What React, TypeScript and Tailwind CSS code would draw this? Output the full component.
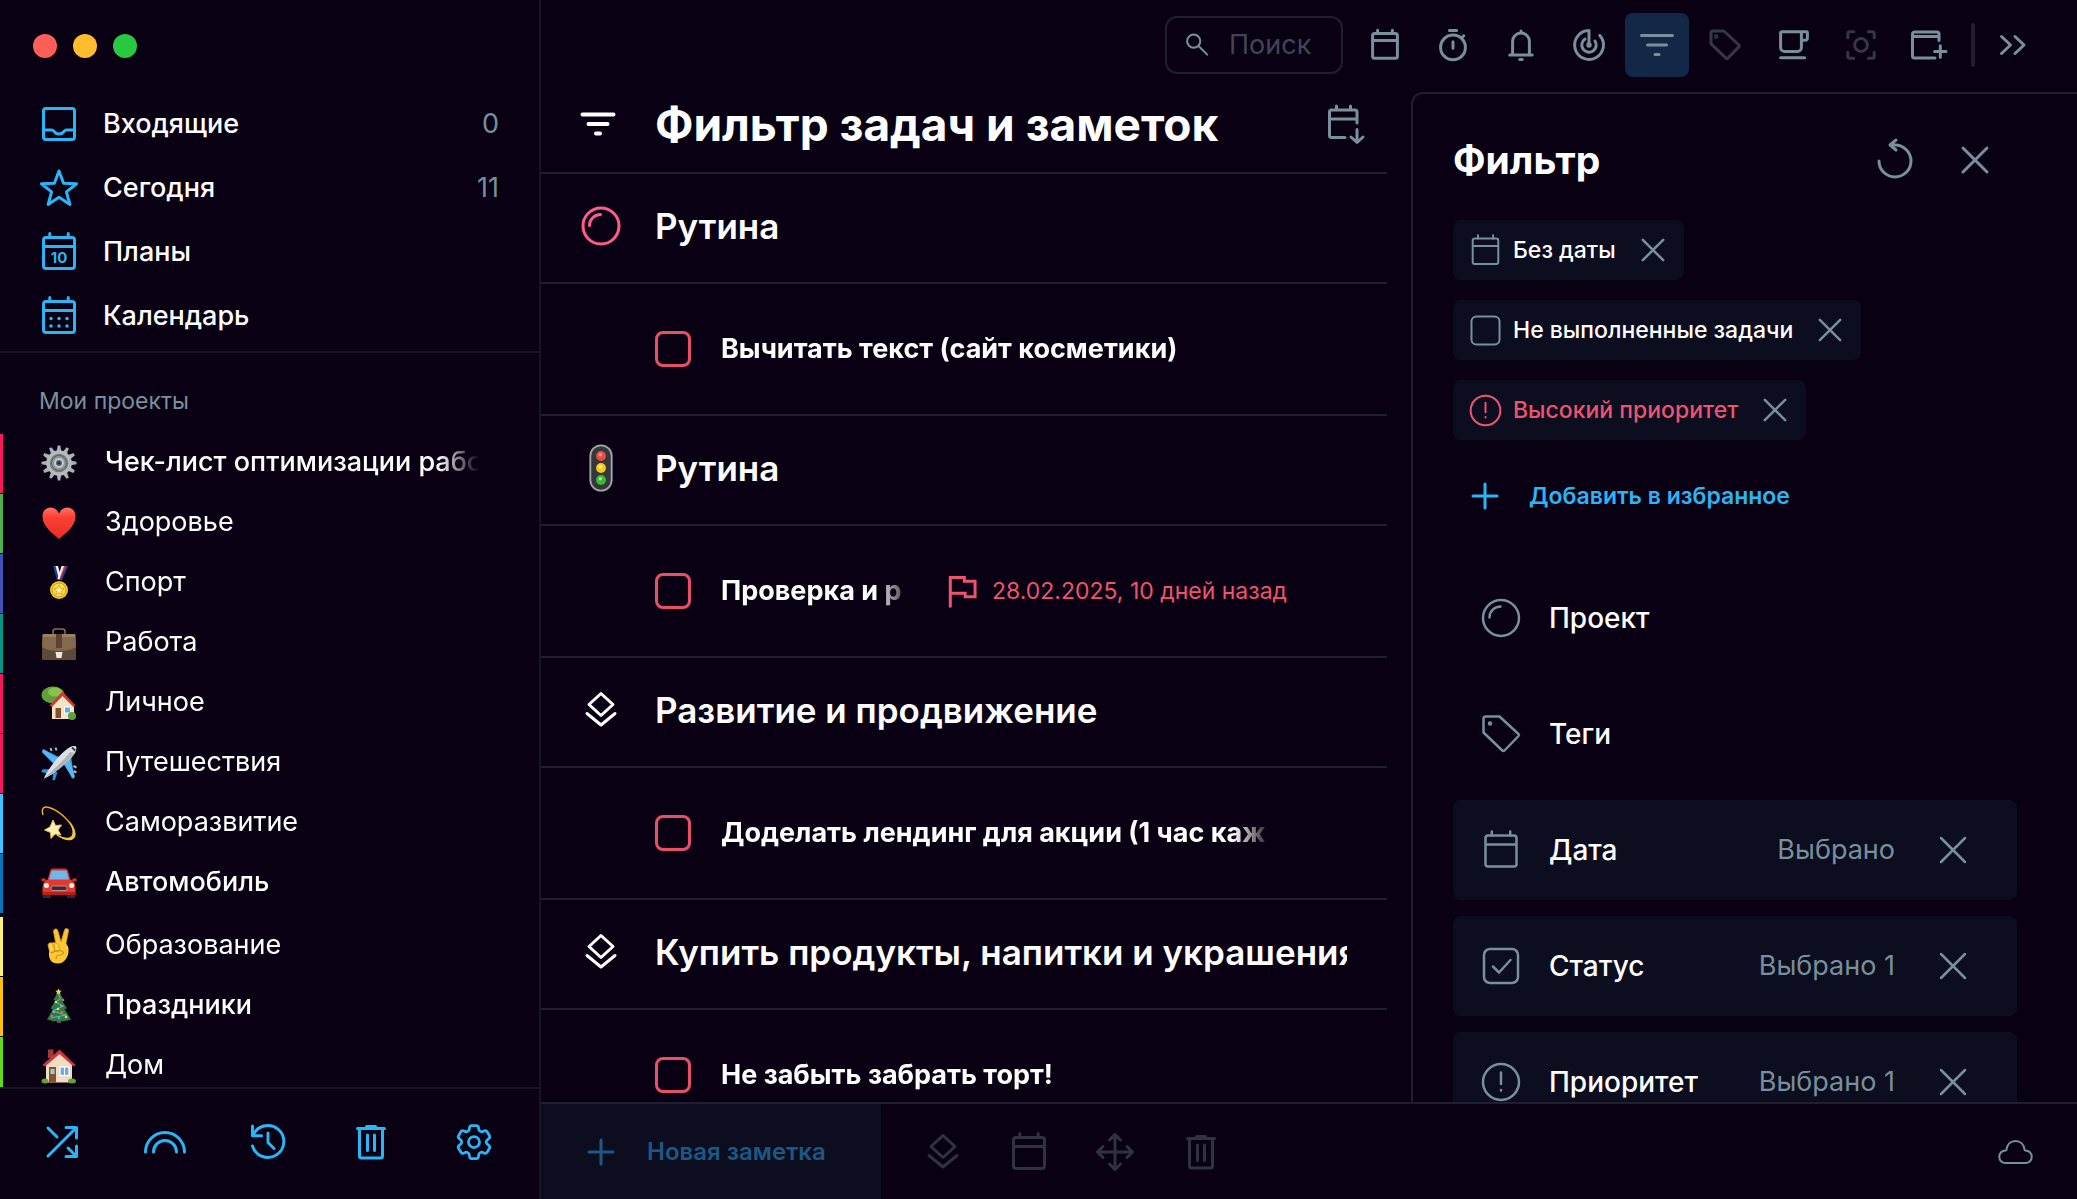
import type { ReactNode } from "react";
import { HiOutlineCog6Tooth } from "react-icons/hi2";

type IconProps = { size?: number; line?: number; className?: string };

function Icon({
  size = 40,
  line = 3,
  className,
  children,
}: IconProps & { children: ReactNode }) {
  return (
    <svg
      width={size}
      height={size}
      viewBox="0 0 40 40"
      fill="none"
      stroke="currentColor"
      strokeWidth={(line * 40) / size}
      strokeLinecap="round"
      strokeLinejoin="round"
      className={`shrink-0 overflow-visible ${className ?? ""}`}
      aria-hidden="true"
    >
      {children}
    </svg>
  );
}

const InboxIcon = (p: IconProps) => (
  <Icon {...p}>
    <rect x="4.5" y="4.5" width="31" height="31" rx="2.5" />
    <path d="M5 26h7.500c1.500 0 2 .8 3 2s2.500 2 4.500 2 3.500-.8 4.500-2 1.500-2 3-2H35" />
  </Icon>
);

const StarIcon = (p: IconProps) => (
  <Icon {...p}>
    <path d="M20 3l4.600 12.200 13 .6-10.200 8.100 3.500 12.600L20 29.300 9.100 36.500l3.500-12.600L2.400 15.800l13-.6z" />
  </Icon>
);

const CalendarIcon = ({ children, ...p }: IconProps & { children?: ReactNode }) => (
  <Icon {...p}>
    <rect x="4.500" y="5.500" width="31" height="31" rx="2.500" />
    <path d="M5 14.500h30M10.800 1.500v4M29.200 1.500v4" />
    {children}
  </Icon>
);

const PlansIcon = (p: IconProps) => (
  <CalendarIcon {...p}>
    <text
      x="20"
      y="31"
      textAnchor="middle"
      fontSize="15"
      fontWeight="700"
      fill="currentColor"
      stroke="none"
    >
      10
    </text>
  </CalendarIcon>
);

const MonthIcon = (p: IconProps) => (
  <CalendarIcon {...p}>
    <path strokeWidth="3.600" d="M12 22.500h0M20 22.500h0M28 22.500h0M12 30h0M20 30h0M28 30h0" />
  </CalendarIcon>
);

const CalendarDownIcon = (p: IconProps) => (
  <Icon {...p}>
    <path d="M20 33.500H6.500a2 2 0 0 1-2-2V8a2 2 0 0 1 2-2H30a2 2 0 0 1 2 2v11M5 15h27M11.500 2v4M25.500 2v4M32 25.500V38M26 33l6 5.500 6-5.500" />
  </Icon>
);

const StopwatchIcon = (p: IconProps) => (
  <Icon {...p}>
    <circle cx="20" cy="23" r="15.500" />
    <path d="M15.500 2h9M20 16v8M31 11l2.500-2.500" />
  </Icon>
);

const BellIcon = (p: IconProps) => (
  <Icon {...p}>
    <path d="M9.500 32.500V15.500a10.500 10.500 0 0 1 21 0v17M6 32.500h28M18.500 38h3M20 2.500V5" />
  </Icon>
);

const RadarIcon = (p: IconProps) => (
  <Icon {...p}>
    <path d="M20 20V2a18 18 0 1 0 13.500 6M15 12.500a9 9 0 1 0 12.500 2.500" />
    <circle cx="20" cy="20" r="1.500" />
  </Icon>
);

const FilterIcon = (p: IconProps) => (
  <Icon {...p}>
    <path d="M4.500 10.500h31M10.500 20h19M18 29.500h4" />
  </Icon>
);

const TagIcon = (p: IconProps) => (
  <Icon {...p}>
    <path d="M4.500 2.500h14L37.500 20a1.500 1.500 0 0 1 0 2L23.500 36.500a1.500 1.500 0 0 1-2.200 0L2.500 18.500v-14a2 2 0 0 1 2-2z" />
    <circle cx="9" cy="9.500" r="1" />
  </Icon>
);

const CupIcon = (p: IconProps) => (
  <Icon {...p}>
    <path d="M4.500 5.500a2 2 0 0 1 2-2H37a1 1 0 0 1 1 1V11a3 3 0 0 1-3 3h-4.500M30.500 3.500V23a5 5 0 0 1-5 5h-16a5 5 0 0 1-5-5V5.500M4.500 36h30" />
  </Icon>
);

const FocusIcon = (p: IconProps) => (
  <Icon {...p}>
    <path d="M3.500 11V6a2.500 2.500 0 0 1 2.500-2.500h5M29 3.500h5A2.500 2.500 0 0 1 36.500 6v5M36.500 29v5a2.500 2.500 0 0 1-2.500 2.500h-5M11 36.500H6A2.500 2.500 0 0 1 3.500 34v-5" />
    <circle cx="20" cy="20" r="8" />
  </Icon>
);

const WindowPlusIcon = (p: IconProps) => (
  <Icon {...p}>
    <path d="M26 33H5.500a2 2 0 0 1-2-2V9a2 2 0 0 1 2-2H28a2 2 0 0 1 2 2v6.500M4 11.500h26M25.500 26.500h11.500M31.300 20.800v11.500" />
  </Icon>
);

const ChevronsIcon = (p: IconProps) => (
  <Icon {...p}>
    <path d="M8.500 11.500l9 8.500-9 8.500M22 11.500l9 8.500-9 8.500" />
  </Icon>
);

const SearchIcon = (p: IconProps) => (
  <Icon {...p}>
    <circle cx="14.500" cy="13.500" r="11" />
    <path d="M23 22l14 14" />
  </Icon>
);

const ResetIcon = (p: IconProps) => (
  <Icon {...p}>
    <path d="M4 21a16 16 0 1 0 16-16h-4M21 0l-6 5 6 5" />
  </Icon>
);

const CloseIcon = (p: IconProps) => (
  <Icon {...p}>
    <path d="M8 8l24 24M32 8L8 32" />
  </Icon>
);

const PlusIcon = (p: IconProps) => (
  <Icon {...p}>
    <path d="M8 20h24M20 8v24" />
  </Icon>
);

const ProjectIcon = (p: IconProps) => (
  <Icon {...p}>
    <circle cx="20" cy="20" r="18" />
    <path d="M8.500 19.500A11 11 0 0 1 19.500 8.500" />
  </Icon>
);

const AlertIcon = (p: IconProps) => (
  <Icon {...p}>
    <circle cx="20" cy="20" r="18" />
    <path d="M20 10.500v11.500M20 28v.5" />
  </Icon>
);

const BoxIcon = ({ checked, ...p }: IconProps & { checked?: boolean }) => (
  <Icon {...p}>
    <rect x="3" y="3" width="34" height="34" rx="6" />
    {checked && <path d="M12 20.500l6 6L29.500 14" />}
  </Icon>
);

const LayersIcon = (p: IconProps) => (
  <Icon {...p}>
    <path d="M20 3.500L32 14.500 20 25.500 8 14.500zM6 23.500L20 35l14-11.500" />
  </Icon>
);

const FlagIcon = (p: IconProps) => (
  <Icon {...p}>
    <path d="M4 38V3h17v4.500h13v19H22V22H4" strokeLinejoin="miter" />
  </Icon>
);

const MoveIcon = (p: IconProps) => (
  <Icon {...p}>
    <path d="M20 2.500v35M2.500 20h35M14.500 8L20 2.500 25.500 8M14.500 32l5.500 5.500 5.500-5.500M8 14.500L2.500 20 8 25.500M32 14.500l5.500 5.500-5.500 5.500" />
  </Icon>
);

const TrashIcon = (p: IconProps) => (
  <Icon {...p}>
    <path d="M8.500 7v27a2 2 0 0 0 2 2h19a2 2 0 0 0 2-2V7M6.500 6.500h27M15.500 4.500h9M16.500 13v15.500M23.500 13v15.500" />
  </Icon>
);

const ShuffleIcon = (p: IconProps) => (
  <Icon {...p}>
    <path d="M6 6l9 9M6 34L34 6M24 5.500h10.500V16M26 26l8 8M24 34.500h10.500V24" />
  </Icon>
);

const RainbowIcon = (p: IconProps) => (
  <Icon {...p}>
    <path d="M.500 30a19.500 19.500 0 0 1 39 0M8.500 30a11.500 11.500 0 0 1 23 0" />
  </Icon>
);

const HistoryIcon = (p: IconProps) => (
  <Icon {...p}>
    <path d="M5 13.500A16 16 0 1 1 4.500 24M4.500 4v9.800h9M20 11v9.500l6 6" />
  </Icon>
);

const CloudIcon = (p: IconProps) => (
  <Icon {...p}>
    <path d="M10.500 31h20a6.200 6.200 0 0 0 0-12.500 1 1 0 0 1-1-1C29 12.500 25.500 9 20.500 9s-8.500 3.500-9 8.500a1 1 0 0 1-1 1 6.200 6.200 0 0 0 0 12.500z" />
  </Icon>
);

function Picture({ children, size = 36 }: { children: ReactNode; size?: number }) {
  return (
    <svg width={size} height={size} viewBox="0 0 36 36" className="shrink-0" aria-hidden="true">
      {children}
    </svg>
  );
}

const GearPicture = () => (
  <Picture>
    {[0, 30, 60, 90, 120, 150, 180, 210, 240, 270, 300, 330].map((a) => (
      <path key={a} d="M15.800 6l.9-5.500h2.600l.9 5.500z" fill="#aab0b4" transform={`rotate(${a} 18 18)`} />
    ))}
    <circle cx="18" cy="18" r="11" fill="#777d81" stroke="#b4babd" strokeWidth="3.500" />
    <circle cx="18" cy="18" r="7.500" fill="#8f969a" stroke="#5c6266" strokeWidth="1" />
    <circle cx="18" cy="18" r="4" fill="#55636e" stroke="#c6cbce" strokeWidth="2" />
    <circle cx="18" cy="18" r="1.500" fill="#202a33" />
  </Picture>
);

const HeartPicture = () => (
  <Picture>
    <defs>
      <linearGradient id="heart" x1="0" y1="0" x2="0" y2="1">
        <stop offset="0" stopColor="#ff7466" />
        <stop offset=".3" stopColor="#fb4136" />
        <stop offset="1" stopColor="#e92c24" />
      </linearGradient>
    </defs>
    <path
      d="M18 34C13 29.500 1.500 22 1.500 11.500 1.500 6 5 2.500 9.500 2.500c3.800 0 7 2.300 8.500 6 1.500-3.700 4.700-6 8.500-6 4.500 0 8 3.500 8 9C34.500 22 23 29.500 18 34z"
      fill="url(#heart)"
    />
  </Picture>
);

const MedalPicture = () => (
  <Picture>
    <path d="M12 1h4l4 14h-4z" fill="#1f3f9c" />
    <path d="M14.500 1H17l3 11-2 2z" fill="#f4f4f8" />
    <path d="M22 1h4.500l-6 14h-4z" fill="#d8303c" />
    <path d="M20.500 1H23l-4.500 13h-2z" fill="#f4f4f8" />
    <path d="M25 1h2l-6 14h-2z" fill="#24409a" />
    <circle cx="18" cy="25" r="9" fill="#f6c624" />
    <circle cx="18" cy="25" r="7" fill="#fadb4d" stroke="#cf9a14" strokeWidth="1" />
    <path d="M18 20l1.500 3.300 3.600.4-2.700 2.400.8 3.500-3.200-1.800-3.200 1.800.8-3.500-2.700-2.400 3.600-.4z" fill="#fff0a0" stroke="#c9920f" strokeWidth=".7" />
  </Picture>
);

const BriefcasePicture = () => (
  <Picture>
    <path d="M12 9V6.500C12 5 13 4 14.500 4h7C23 4 24 5 24 6.500V9" fill="none" stroke="#8a6f4b" strokeWidth="1.500" />
    <rect x="1" y="9" width="34" height="26" rx="1.500" fill="#5d4937" />
    <path d="M2 9h32l1 13c-5 3-10 4-17 4S6 25 1 22z" fill="#84694e" />
    <path d="M2 9h32v3H2z" fill="#9b8162" />
    <rect x="15" y="9" width="6" height="14" fill="#5a4330" />
    <path d="M14.500 27h7l-1 6h-5z" fill="#ece9e2" />
  </Picture>
);

const GardenPicture = () => (
  <Picture>
    <path d="M12 16h4v10h-4z" fill="#7a4a25" />
    <ellipse cx="12" cy="10" rx="11.500" ry="8.500" fill="#5fa03a" />
    <ellipse cx="14" cy="7" rx="7" ry="4.500" fill="#86c24c" />
    <path d="M11 20l11-12 11 12v14H11z" fill="#f4e4c6" />
    <path d="M8.500 20.500L21.500 6.500l13 14-2 1.500L21.500 11 11 22z" fill="#cf3a34" />
    <rect x="14.500" y="23" width="5.500" height="10" fill="#84502c" />
    <rect x="23.500" y="22" width="6" height="6" fill="#5cadea" stroke="#fff" strokeWidth="1" />
    <circle cx="31" cy="31" r="4" fill="#5fa03a" />
  </Picture>
);

const PlanePicture = () => (
  <Picture>
    <path d="M18 12L3 4.500 1 7l11.500 12zM24 18l7 15.500 2-2.500-3-20z" fill="#2f9fe6" />
    <path d="M18 14L2 4l-1 3 13 12zM22 18l10 16 2-2.500-6-18z" fill="#55b8f2" />
    <path d="M9.500 24L1 24.500.500 27l7.500 2zM12 27l-.5 8.500 2.500-.5 2.500-8z" fill="#2a94df" />
    <path d="M3 33.500C6 25 21 6 28.500 2.500 31 1 34 .8 35 1.500c.7 1 .5 4-1 6.500C30 15 11.500 30.500 3 33.500z" fill="#dcdfe3" />
    <path d="M3 33.500C11.500 30.500 30 15 34 8l-5-1C24 14 8 29 3 33.500z" fill="#aeb4bc" />
    <path d="M31 2.500l3.200 3" stroke="#2d3c57" strokeWidth="2" />
    <path d="M9.500 3l1 3M14.500 2.500l1 3M32.500 21l3 1.500M32.500 26l3 1.500" stroke="#aeb8c2" strokeWidth="2" />
  </Picture>
);

const DizzyPicture = () => (
  <Picture>
    <path d="M2 10C0 3 3 1 8 2.500 17 5 29 15 33 26c1.500 5-.5 8.500-6 8-4-.3-8-2-11-4" fill="none" stroke="#e8b02a" strokeWidth="1.500" />
    <path d="M28 15c4 5 7 11 6.500 15-.5 4-4 6-9 5-4-.7-8-3-11-6 6 3.500 12 5 15.500 2.500C33 29 31 21 28 15z" fill="#f7c63c" />
    <path d="M12 15l2.500 5.500 6-.5-3.500 5 3 5-6-1-4 4.500-.5-6-6-2.500 5.500-3z" fill="#fdf0b5" stroke="#efc04c" strokeWidth="1" />
  </Picture>
);

const CarPicture = () => (
  <Picture>
    <path d="M6.500 15L9 6c.5-1.800 1.500-2.500 3-2.500h12c1.500 0 2.500.7 3 2.500l2.500 9z" fill="#d9312b" />
    <path d="M8 15l2-8c.3-1 1-1.500 2-1.500h12c1 0 1.700.5 2 1.500l2 8z" fill="#6fb7ec" />
    <path d="M.500 13.500h4v2.500h-4zM31.500 13.500h4v2.500h-4z" fill="#d9312b" />
    <path d="M3 17c1-1.500 3-2.500 5-2.500h20c2 0 4 1 5 2.500 1 1.500 1.500 4 1.500 7v6h-33v-6c0-3 .5-5.500 1.500-7z" fill="#e6372f" />
    <path d="M2 29h8v4H2zM26 29h8v4h-8z" fill="#3a2530" />
    <rect x="10" y="21" width="16" height="4.500" rx="2" fill="#4b2430" stroke="#b9a9ad" strokeWidth=".8" />
    <circle cx="5.500" cy="20.500" r="2.500" fill="#f6f3e6" />
    <circle cx="30.500" cy="20.500" r="2.500" fill="#f6f3e6" />
    <rect x="2" y="27" width="32" height="3" fill="#b81f1c" />
  </Picture>
);

const VictoryPicture = () => (
  <Picture>
    <path d="M15.500 19L12.500 3.500c-.3-2.800 3.500-3.500 4.300-1L20 14l3.500-12c1-2.500 4.500-1.500 4 1L24.500 18z" fill="#fbc62e" stroke="#dd9a1a" strokeWidth=".8" />
    <path d="M8 18c0-2 1.500-3.500 4-3.500h8c4 0 7 2 7.500 6 .4 4-.5 8-3 11-2 2.500-4 4-8 4-5 0-8-3-8.500-8z" fill="#fcc934" />
    <path d="M7 17c1-3 4-3 5 0l1.500 5c.5 3-4 4-5 1zM13 17c1-2.500 4-2.500 4.500.5l1 4c.3 2.500-4 3-4.500.5z" fill="#fdd24a" stroke="#d9961a" strokeWidth=".9" />
    <path d="M10 25c4-3 9-3 11.500-1.500 2 1.500 0 3.500-2.500 3.500-3 0-4 2-4 4" fill="none" stroke="#d28c16" strokeWidth="1.200" />
  </Picture>
);

const TreePicture = () => (
  <Picture>
    <path d="M16 31h4v4h-4z" fill="#7b4524" />
    <path d="M17.500 3l5.500 9-2 .5 5 8-2.500.5 6.500 10.500c-7 2.500-17 2.500-24 0L12 21l-2.500-.5 5-8-2-.5z" fill="#2f7a4c" />
    <path d="M17.500 6l2 5-5 3 8 4-11 5 14 4-16 3" fill="none" stroke="#6fb98a" strokeWidth="1" />
    <path d="M17.500.500l1 2 2.200.3-1.600 1.500.4 2.200-2-1-2 1 .4-2.200-1.600-1.500 2.200-.3z" fill="#f9cf3a" />
    <g fill="#ee5b66">
      <circle cx="22" cy="12" r="1.300" />
      <circle cx="11" cy="28" r="1.300" />
      <circle cx="21" cy="24" r="1.300" />
    </g>
    <g fill="#f7d65a">
      <circle cx="15" cy="14" r="1.300" />
      <circle cx="17" cy="21" r="1.300" />
      <circle cx="25" cy="29" r="1.300" />
    </g>
    <g fill="#63a5f0">
      <circle cx="20" cy="18" r="1.200" />
      <circle cx="13" cy="24" r="1.200" />
      <circle cx="18" cy="30" r="1.200" />
    </g>
  </Picture>
);

const HousePicture = () => (
  <Picture>
    <path d="M7 1.500h5.500V10H7z" fill="#9e3b35" />
    <path d="M5 16L18.500 4 31 16v18.500H5z" fill="#f3dcc0" />
    <path d="M1.500 17L18.500 1.500 34.500 17l-2 1.500-14-12.500L4 18.500z" fill="#cf3440" />
    <rect x="8" y="19" width="7" height="15.500" fill="#85522f" />
    <rect x="9.500" y="21" width="4" height="5" fill="#8ecdf5" />
    <rect x="19" y="19" width="9" height="8.500" fill="#66aeea" stroke="#fff" strokeWidth="1.200" />
    <path d="M23.500 19v8.500" stroke="#fff" strokeWidth="1" />
    <ellipse cx="4" cy="33" rx="3.500" ry="2.500" fill="#62a13c" />
    <ellipse cx="31" cy="33" rx="4" ry="2.500" fill="#62a13c" />
  </Picture>
);

const TrafficLightPicture = () => (
  <Picture size={48}>
    <rect x="10" y="1" width="16" height="34" rx="8" fill="#35373a" stroke="#a2a6a8" strokeWidth="1.400" />
    <circle cx="18" cy="9" r="3.700" fill="#ef4b45" />
    <circle cx="18" cy="18" r="3.700" fill="#f7c81e" />
    <circle cx="18" cy="27" r="3.700" fill="#3dbb37" />
    <circle cx="17.500" cy="8" r="1.300" fill="#ff9a8f" />
    <circle cx="17.500" cy="17" r="1.300" fill="#fff09a" />
    <circle cx="17.500" cy="26" r="1.300" fill="#8ff07e" />
  </Picture>
);

const navItems = [
  { label: "Входящие", icon: InboxIcon, count: "0" },
  { label: "Сегодня", icon: StarIcon, count: "11" },
  { label: "Планы", icon: PlansIcon },
  { label: "Календарь", icon: MonthIcon },
];

const projects = [
  { label: "Чек-лист оптимизации рабо", picture: GearPicture, bar: "bg-[#f5185f]", text: "font-medium" },
  { label: "Здоровье", picture: HeartPicture, bar: "bg-[#4caf50]" },
  { label: "Спорт", picture: MedalPicture, bar: "bg-[#3f51b5]" },
  { label: "Работа", picture: BriefcasePicture, bar: "bg-[#009688]" },
  { label: "Личное", picture: GardenPicture, bar: "bg-[#f5185f]" },
  { label: "Путешествия", picture: PlanePicture, bar: "bg-[#f5185f]" },
  { label: "Саморазвитие", picture: DizzyPicture, bar: "bg-[#40c4ff]" },
  { label: "Автомобиль", picture: CarPicture, bar: "bg-[#0277bd]", text: "font-medium" },
  { label: "Образование", picture: VictoryPicture, bar: "bg-[#fff176] mt-1" },
  { label: "Праздники", picture: TreePicture, bar: "bg-[#ffc107]", text: "font-medium" },
  { label: "Дом", picture: HousePicture, bar: "bg-[#64dd17]" },
];

function Sidebar() {
  return (
    <aside className="flex w-[541px] shrink-0 flex-col border-r-2 border-[#171424]">
      <div className="flex h-[92px] shrink-0 items-center gap-4 pl-[33px]">
        <button aria-label="Закрыть окно" className="size-6 rounded-full bg-[#ff5f57]" />
        <button aria-label="Свернуть окно" className="size-6 rounded-full bg-[#febc2e]" />
        <button aria-label="Развернуть окно" className="size-6 rounded-full bg-[#28c840]" />
      </div>
      <nav className="shrink-0 border-b-2 border-[#171424] pb-[3px]">
        {navItems.map(({ label, icon: ItemIcon, count }) => (
          <a key={label} href="#" className="flex h-16 items-center gap-6 pr-10 pl-[39px] text-[27px] font-medium">
            <ItemIcon className="text-[#29b6f6]" />
            <span className="flex-1">{label}</span>
            {count && <span className="font-normal text-[#78909c]">{count}</span>}
          </a>
        ))}
      </nav>
      <h2 className="flex h-[81px] shrink-0 items-center pt-4 pl-[39px] text-[23px] text-[#78909c]">Мои проекты</h2>
      <div className="min-h-0 flex-1 overflow-hidden">
        {projects.map(({ label, picture: ItemPicture, bar, text }) => (
          <div key={label} className={`mb-px h-[59px] rounded-r-sm pl-[3px] ${bar}`}>
            <a
              href="#"
              className={`flex h-full items-center gap-7 bg-[#0a0014] pr-[60px] pb-[2px] pl-[38px] text-[27px] ${text ?? ""}`}
            >
              <ItemPicture />
              <span className="min-w-0 flex-1 overflow-hidden whitespace-nowrap [mask-image:linear-gradient(to_right,black_calc(100%-40px),transparent)]">
                {label}
              </span>
            </a>
          </div>
        ))}
      </div>
      <div className="flex h-[112px] shrink-0 border-t-2 border-[#171424] pr-[14px] pb-1 pl-[10px] text-[#29b6f6]">
        <button aria-label="Перемешать" className="flex flex-1 items-center justify-center">
          <ShuffleIcon />
        </button>
        <button aria-label="Фокус" className="flex flex-1 items-center justify-center">
          <RainbowIcon />
        </button>
        <button aria-label="История" className="flex flex-1 items-center justify-center">
          <HistoryIcon />
        </button>
        <button aria-label="Корзина" className="flex flex-1 items-center justify-center">
          <TrashIcon />
        </button>
        <button aria-label="Настройки" className="flex flex-1 items-center justify-center">
          <HiOutlineCog6Tooth className="size-11" />
        </button>
      </div>
    </aside>
  );
}

const tools = [
  { label: "Календарь", icon: CalendarIcon },
  { label: "Секундомер", icon: StopwatchIcon },
  { label: "Напоминания", icon: BellIcon },
  { label: "Трекер", icon: RadarIcon },
  { label: "Фильтр", icon: FilterIcon, size: 40, style: "bg-[#132846]" },
  { label: "Теги", icon: TagIcon, style: "text-[#373646]" },
  { label: "Перерыв", icon: CupIcon },
  { label: "Фокусировка", icon: FocusIcon, style: "text-[#373646]" },
  { label: "Новое окно", icon: WindowPlusIcon, size: 40 },
];

function Toolbar() {
  return (
    <header className="flex h-[92px] shrink-0 items-center justify-end pr-8 pb-[2px] text-[#78909c]">
      <label className="mr-[10px] flex h-[58px] w-[178px] items-center gap-5 rounded-xl border-2 border-[#211e2f] pr-4 pl-[18px]">
        <SearchIcon size={24} line={2} />
        <input
          type="text"
          aria-label="Поиск"
          placeholder="Поиск"
          className="w-full min-w-0 bg-transparent text-[27px] outline-none placeholder:text-[#414556]"
        />
      </label>
      <div className="flex gap-1">
        {tools.map(({ label, icon: ToolIcon, size, style }) => (
          <button
            key={label}
            aria-label={label}
            className={`flex size-16 items-center justify-center rounded-lg ${style ?? ""}`}
          >
            <ToolIcon size={size ?? 32} />
          </button>
        ))}
      </div>
      <div className="mr-[6px] ml-[10px] h-11 w-1 rounded-full bg-[#211e2f]" />
      <button aria-label="Свернуть панель" className="flex size-16 items-center justify-center">
        <ChevronsIcon />
      </button>
    </header>
  );
}

const sections = [
  {
    title: "Рутина",
    icon: <ProjectIcon className="text-[#ff5c8d]" />,
    task: "Вычитать текст (сайт косметики)",
  },
  {
    title: "Рутина",
    icon: <TrafficLightPicture />,
    task: "Проверка и р",
    due: "28.02.2025, 10 дней назад",
  },
  {
    title: "Развитие и продвижение",
    icon: <LayersIcon />,
    task: "Доделать лендинг для акции (1 час каж",
  },
  {
    title: "Купить продукты, напитки и украшения",
    icon: <LayersIcon />,
    task: "Не забыть забрать торт!",
  },
];

function TaskList() {
  return (
    <main className="mr-6 min-w-0 flex-1 overflow-hidden">
      <div className="flex h-[82px] items-center border-b-2 border-[#211e2f] pr-[22px] pb-4">
        <div className="flex w-[114px] shrink-0 justify-center">
          <FilterIcon line={4} />
        </div>
        <h1 className="flex-1 text-[46px] leading-none font-bold whitespace-nowrap">Фильтр задач и заметок</h1>
        <button aria-label="Сортировка по дате" className="text-[#78909c]">
          <CalendarDownIcon />
        </button>
      </div>
      {sections.map(({ title, icon, task, due }) => (
        <section key={task}>
          <div className="flex h-[110px] items-center border-b-2 border-[#211e2f] pr-10 pb-1">
            <div className="flex w-[114px] shrink-0 justify-center pl-[6px]">{icon}</div>
            <h2 className="min-w-0 flex-1 overflow-hidden text-[35px] font-semibold whitespace-nowrap">{title}</h2>
          </div>
          <div className={`flex h-[132px] items-center border-b-2 border-[#211e2f] pl-[114px] ${due ? "pr-[100px]" : "pr-[114px]"}`}>
            <label className="flex min-w-0 flex-1 items-center gap-[30px]">
              <input
                type="checkbox"
                className="size-9 shrink-0 appearance-none rounded-lg border-3 border-[#e8506a]"
              />
              <span className="min-w-0 flex-1 overflow-hidden text-[27px] font-bold whitespace-nowrap [mask-image:linear-gradient(to_right,black_calc(100%-40px),transparent)]">
                {task}
              </span>
            </label>
            {due && (
              <span className="ml-8 flex shrink-0 items-center gap-3 text-[23px] text-[#ef5370]">
                <FlagIcon size={33} />
                {due}
              </span>
            )}
          </div>
        </section>
      ))}
    </main>
  );
}

const chips = [
  { label: "Без даты", icon: <CalendarIcon size={33} line={2} className="text-[#78909c]" /> },
  { label: "Не выполненные задачи", icon: <BoxIcon size={33} line={2} className="text-[#78909c]" /> },
  {
    label: "Высокий приоритет",
    icon: <AlertIcon size={33} line={2} />,
    style: "text-[#ef5370]",
  },
];

const filters = [
  { label: "Проект", icon: <ProjectIcon line={2.5} /> },
  { label: "Теги", icon: <TagIcon line={2.5} /> },
  { label: "Дата", icon: <CalendarIcon line={2.5} />, value: "Выбрано" },
  { label: "Статус", icon: <BoxIcon line={2.5} checked />, value: "Выбрано 1" },
  { label: "Приоритет", icon: <AlertIcon line={2.5} />, value: "Выбрано 1" },
];

function FilterPanel() {
  return (
    <aside className="w-[666px] shrink-0 overflow-hidden rounded-tl-xl border-t-2 border-l-2 border-[#211e2f] pr-[60px] pl-10">
      <div className="flex h-[126px] items-center gap-10 pt-[6px] pr-[22px] text-[#78909c]">
        <h2 className="flex-1 text-[39px] font-bold text-white">Фильтр</h2>
        <button aria-label="Сбросить">
          <ResetIcon />
        </button>
        <button aria-label="Закрыть">
          <CloseIcon />
        </button>
      </div>
      <div className="flex flex-col items-start gap-5">
        {chips.map(({ label, icon, style }) => (
          <div
            key={label}
            className={`flex h-[60px] items-center rounded-lg bg-[#0d0d20] pr-[14px] pl-4 text-[23px] font-medium ${style ?? ""}`}
          >
            {icon}
            <span className="ml-[11px] whitespace-nowrap">{label}</span>
            <button aria-label={`Убрать: ${label}`} className="ml-5 text-[#78909c]">
              <CloseIcon size={34} line={2.5} />
            </button>
          </div>
        ))}
      </div>
      <button className="mt-6 flex h-16 items-center gap-6 pl-3 text-[23px] font-semibold text-[#29b6f6]">
        <PlusIcon />
        Добавить в избранное
      </button>
      <div className="mt-10 flex flex-col gap-4">
        {filters.map(({ label, icon, value }) => (
          <div
            key={label}
            className={`flex h-[100px] shrink-0 items-center rounded-lg pr-11 pl-7 text-[28px] text-[#78909c] ${value ? "bg-[#0d0d20]" : ""}`}
          >
            {icon}
            <span className="ml-7 flex-1 font-medium text-white">{label}</span>
            {value && (
              <>
                <span className="text-[27px]">{value}</span>
                <button aria-label={`Сбросить: ${label}`} className="ml-[38px]">
                  <CloseIcon line={2.5} />
                </button>
              </>
            )}
          </div>
        ))}
      </div>
    </aside>
  );
}

function BottomBar() {
  return (
    <footer className="flex h-[97px] shrink-0 items-center border-t-2 border-[#211e2f] pr-[42px] text-[#2f3242]">
      <button className="flex h-full w-[340px] items-center gap-[26px] bg-[#0d0d20] pl-10 text-2xl font-semibold text-[#1c5883]">
        <PlusIcon />
        Новая заметка
      </button>
      <div className="ml-[42px] flex flex-1 gap-[46px]">
        <button aria-label="Слои">
          <LayersIcon />
        </button>
        <button aria-label="Дата">
          <CalendarIcon />
        </button>
        <button aria-label="Переместить">
          <MoveIcon />
        </button>
        <button aria-label="Удалить">
          <TrashIcon />
        </button>
      </div>
      <button aria-label="Синхронизация" className="text-[#78909c]">
        <CloudIcon line={2} />
      </button>
    </footer>
  );
}

export default function App() {
  return (
    <div className="flex h-screen overflow-hidden bg-[#0a0014] font-['Inter',sans-serif] text-white">
      <Sidebar />
      <div className="flex min-w-0 flex-1 flex-col">
        <Toolbar />
        <div className="flex min-h-0 flex-1">
          <TaskList />
          <FilterPanel />
        </div>
        <BottomBar />
      </div>
    </div>
  );
}
